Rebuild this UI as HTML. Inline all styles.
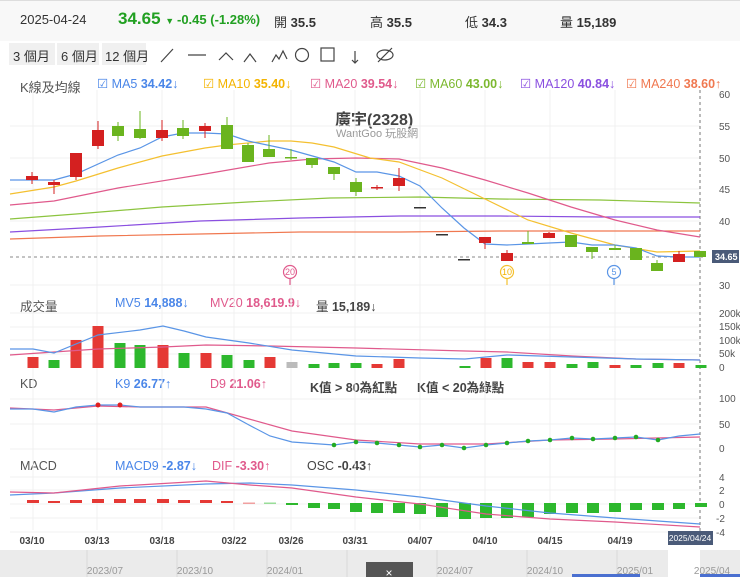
<!DOCTYPE html>
<html><head><meta charset="utf-8"><style>
body{margin:0;width:740px;height:577px;overflow:hidden;background:#fff;font-family:"Liberation Sans","Noto Sans CJK TC",sans-serif;position:relative}
.a{position:absolute;white-space:nowrap}
</style></head><body>
<div class="a" style="left:0;top:0;width:740px;height:40px;background:#f8f8f8;border-top:1px solid #ddd"></div>
<div class="a" style="left:20px;top:12px;font-size:13px;color:#333">2025-04-24</div>
<div class="a" style="left:118px;top:9px;font-size:17px;color:#22a022;font-weight:bold">34.65 <span style="font-size:9px">▼</span></div>
<div class="a" style="left:177px;top:12px;font-size:13px;color:#22a022;font-weight:bold">-0.45 (-1.28%)</div>
<div class="a" style="left:274px;top:12px;font-size:13px;color:#333">開 <b>35.5</b></div>
<div class="a" style="left:370px;top:12px;font-size:13px;color:#333">高 <b>35.5</b></div>
<div class="a" style="left:465px;top:12px;font-size:13px;color:#333">低 <b>34.3</b></div>
<div class="a" style="left:560px;top:12px;font-size:13px;color:#333">量 <b>15,189</b></div>
<div class="a" style="left:9px;top:43px;width:46px;height:22px;background:#f0f0f0"></div>
<div class="a" style="left:57px;top:43px;width:42px;height:22px;background:#f0f0f0"></div>
<div class="a" style="left:102px;top:43px;width:44px;height:22px;background:#f0f0f0"></div>
<div class="a" style="left:13px;top:46px;font-size:13px;color:#333">3 個月</div>
<div class="a" style="left:61px;top:46px;font-size:13px;color:#333">6 個月</div>
<div class="a" style="left:105px;top:46px;font-size:13px;color:#333">12 個月</div>
<svg class="a" style="left:155px;top:43px" width="250" height="24" fill="none" stroke="#444" stroke-width="1.2">
<path d="M6 19L18 6"/><path d="M33 12h18M38 12h1"/><path d="M64 17l7-7 7 7"/>
<path d="M89 19l6-8 6 8"/><path d="M117 19l4-7 3 4 4-8 4 8"/>
<circle cx="147" cy="12" r="6.5"/><rect x="166" y="5" width="13" height="13"/>
<path d="M200 8v12M197 17l3 3 3-3"/><ellipse cx="230" cy="12" rx="8" ry="5"/><path d="M223 19l14-14"/>
</svg>
<div class="a" style="left:20px;top:77px;font-size:13px;color:#555">K線及均線</div>
<div class="a" style="top:76px;left:97px;font-size:12.5px;color:#4a86e8">☑ MA5 <b>34.42↓</b></div>
<div class="a" style="top:76px;left:203px;font-size:12.5px;color:#f4b400">☑ MA10 <b>35.40↓</b></div>
<div class="a" style="top:76px;left:310px;font-size:12.5px;color:#e05a8c">☑ MA20 <b>39.54↓</b></div>
<div class="a" style="top:76px;left:415px;font-size:12.5px;color:#7cb82f">☑ MA60 <b>43.00↓</b></div>
<div class="a" style="top:76px;left:520px;font-size:12.5px;color:#8a4fe0">☑ MA120 <b>40.84↓</b></div>
<div class="a" style="top:76px;left:626px;font-size:12.5px;color:#f07850">☑ MA240 <b>38.60↑</b></div>
<div class="a" style="left:335px;top:106px;font-size:16px;font-weight:bold;color:#444">廣宇(2328)</div>
<div class="a" style="left:336px;top:125px;font-size:11px;color:#999">WantGoo 玩股網</div>
<div class="a" style="left:20px;top:296px;font-size:12.5px;color:#555">成交量</div>
<div class="a" style="left:115px;top:296px;font-size:12.5px;color:#4a86e8">MV5 <b>14,888↓</b></div>
<div class="a" style="left:210px;top:296px;font-size:12.5px;color:#e05a8c">MV20 <b>18,619.9↓</b></div>
<div class="a" style="left:316px;top:296px;font-size:12.5px;color:#444">量 <b>15,189↓</b></div>
<div class="a" style="left:20px;top:377px;font-size:12.5px;color:#555">KD</div>
<div class="a" style="left:115px;top:377px;font-size:12.5px;color:#4a86e8">K9 <b>26.77↑</b></div>
<div class="a" style="left:210px;top:377px;font-size:12.5px;color:#e05a8c">D9 <b>21.06↑</b></div>
<div class="a" style="left:310px;top:377px;font-size:12.5px;color:#444;font-weight:bold">K值 &gt; 80為紅點</div>
<div class="a" style="left:417px;top:377px;font-size:12.5px;color:#444;font-weight:bold">K值 &lt; 20為綠點</div>
<div class="a" style="left:20px;top:459px;font-size:12.5px;color:#555">MACD</div>
<div class="a" style="left:115px;top:459px;font-size:12.5px;color:#4a86e8">MACD9 <b>-2.87↓</b></div>
<div class="a" style="left:212px;top:459px;font-size:12.5px;color:#e05a8c">DIF <b>-3.30↑</b></div>
<div class="a" style="left:307px;top:459px;font-size:12.5px;color:#444">OSC <b>-0.43↑</b></div>
<svg class="a" style="left:0;top:0" width="740" height="577" font-family="Liberation Sans,sans-serif">
<g stroke="#f0f0f0"><path d="M33 90V530M97 90V530M162 90V530M234 90V530M291 90V530M355 90V530M420 90V530M485 90V530M550 90V530M615 90V530"/>
<path d="M10 126H700M10 158H700M10 189H700M10 221H700M10 285H700M10 313H700M10 327H700M10 340H700M10 354H700M10 399H700M10 424H700M10 449H700M10 477H700M10 490H700M10 504H700M10 518H700M10 532H700"/></g>
<path d="M700 90V532" stroke="#777" stroke-dasharray="3,3"/>
<path d="M10 257H705" stroke="#888" stroke-dasharray="3,3"/>
<g fill="none" stroke-width="1.2">
<polyline stroke="#f07850" points="10,239 100,236 200,234 300,232 400,232 500,231 600,231 700,231"/>
<polyline stroke="#8a4fe0" points="10,232 100,227 200,221 300,218 400,216 500,216 600,217 700,217"/>
<polyline stroke="#8cc43f" points="10,219 76,214 162,207 248,202 330,198 420,197 500,199 600,200 700,203"/>
<polyline stroke="#e05a8c" points="10,205 54,201 118,188 205,174 269,163 312,159 356,158 399,159 442,168 485,180 528,193 571,207 615,220 657,230 700,237"/>
<polyline stroke="#f4c030" points="10,194 54,187 76,181 118,168 162,156 205,148 227,145 269,141 291,141 312,143 334,147 370,158 399,162 442,178 485,199 528,220 571,233 615,245 657,252 700,251"/>
<polyline stroke="#5a95e6" points="10,180 54,180 76,174 118,155 140,148 162,137 183,133 205,133 227,134 248,141 291,150 334,162 356,172 377,172 399,176 420,186 442,208 464,228 485,244 507,245 528,244 549,243 571,242 592,245 615,245 636,248 657,256 679,257 700,257"/>
</g>
<g id="c"></g>
<g fill="#fff" stroke-width="1.2" font-size="9" text-anchor="middle">
<circle cx="290" cy="272" r="6.5" stroke="#e05a8c"/><text x="290" y="275" fill="#e05a8c">20</text><path d="M290 279v6" stroke="#e05a8c"/>
<circle cx="507" cy="272" r="6.5" stroke="#f4c030"/><text x="507" y="275" fill="#f4b400">10</text><path d="M507 279v6" stroke="#f4c030"/>
<circle cx="614" cy="272" r="6.5" stroke="#5a95e6"/><text x="614" y="275" fill="#5a95e6">5</text><path d="M614 279v6" stroke="#5a95e6"/>
</g>
<g font-size="10" fill="#555"><text x="719" y="98">60</text><text x="719" y="130">55</text><text x="719" y="162">50</text><text x="719" y="193">45</text><text x="719" y="225">40</text><text x="719" y="289">30</text>
<text x="719" y="317">200k</text><text x="719" y="330">150k</text><text x="719" y="344">100k</text><text x="719" y="357">50k</text><text x="719" y="371">0</text>
<text x="719" y="402">100</text><text x="719" y="428">50</text><text x="719" y="452">0</text>
<text x="719" y="481">4</text><text x="719" y="494">2</text><text x="719" y="508">0</text><text x="716" y="522">-2</text><text x="716" y="536">-4</text></g>
<rect x="712" y="250" width="27" height="13" fill="#4a5a78"/><text x="715" y="260" font-size="9" fill="#fff" font-weight="bold">34.65</text>
<g fill="none" stroke-width="1.2">
<polyline stroke="#e05a8c" points="10,355 54,352 98,349 163,347 206,345 270,346 356,348 465,351 507,352 572,356 636,359 700,360"/>
<polyline stroke="#5a95e6" points="10,349 33,349 54,353 98,335 140,330 163,326 184,331 206,337 249,343 292,350 356,356 420,358 465,359 507,355 572,357 636,359 700,360"/>
<polyline stroke="#e05a8c" points="10,408 54,410 98,406 140,407 206,407 249,419 292,431 356,440 420,444 486,444 550,440 615,439 700,437"/>
<polyline stroke="#5a95e6" points="10,409 33,409 54,412 76,407 98,405 120,405 140,407 184,407 206,409 227,413 249,425 270,436 292,442 334,445 356,442 377,443 420,447 442,445 464,448 486,445 507,443 528,441 550,440 572,438 593,439 615,438 636,437 658,440 679,436 700,434"/>
<polyline stroke="#5a95e6" points="10,495 54,493 120,488 206,484 250,483 292,485 356,490 420,497 486,506 550,513 615,518 700,524"/>
<polyline stroke="#e05a8c" points="10,492 54,493 120,486 206,481 250,485 292,488 356,497 420,504 486,514 550,519 615,522 700,527"/>
</g>
<g fill="#e02020"><circle cx="98" cy="405" r="2.5"/><circle cx="120" cy="405" r="2.5"/></g>
<g fill="#22aa22"><circle cx="334" cy="445" r="2.3"/><circle cx="356" cy="442" r="2.3"/><circle cx="377" cy="443" r="2.3"/><circle cx="399" cy="445" r="2.3"/><circle cx="420" cy="447" r="2.3"/><circle cx="442" cy="445" r="2.3"/><circle cx="464" cy="448" r="2.3"/><circle cx="486" cy="445" r="2.3"/><circle cx="507" cy="443" r="2.3"/><circle cx="528" cy="441" r="2.3"/><circle cx="550" cy="440" r="2.3"/><circle cx="572" cy="438" r="2.3"/><circle cx="593" cy="439" r="2.3"/><circle cx="615" cy="438" r="2.3"/><circle cx="636" cy="437" r="2.3"/><circle cx="658" cy="440" r="2.3"/></g>
<g font-size="10" fill="#444" font-weight="bold" text-anchor="middle"><text x="32" y="544">03/10</text><text x="97" y="544">03/13</text><text x="162" y="544">03/18</text><text x="234" y="544">03/22</text><text x="291" y="544">03/26</text><text x="355" y="544">03/31</text><text x="420" y="544">04/07</text><text x="485" y="544">04/10</text><text x="550" y="544">04/15</text><text x="620" y="544">04/19</text></g>
<rect x="668" y="531" width="45" height="14" fill="#4a5a78"/><text x="690" y="541" font-size="8.5" fill="#fff" text-anchor="middle">2025/04/24</text>
<rect x="0" y="550" width="740" height="27" fill="#ebebeb"/>
<rect x="668" y="550" width="32" height="27" fill="#fff"/>
<g stroke="#d8d8d8"><path d="M87 550v27M177 550v27M267 550v27M347 550v27M437 550v27M527 550v27M617 550v27"/></g>
<g font-size="10" fill="#999" text-anchor="middle"><text x="105" y="574">2023/07</text><text x="195" y="574">2023/10</text><text x="285" y="574">2024/01</text><text x="455" y="574">2024/07</text><text x="545" y="574">2024/10</text><text x="635" y="574">2025/01</text><text x="712" y="574">2025/04</text></g>
<rect x="366" y="562" width="47" height="15" fill="#555"/><text x="389" y="577" font-size="12" fill="#fff" text-anchor="middle">×</text>
<rect x="572" y="574" width="68" height="3" fill="#4a6fd0"/><rect x="700" y="574" width="40" height="3" fill="#4a6fd0"/>
</svg>
<script>
var C=[[32,'r',176,180,172,184],[54,'r',182,185,180,194],[76,'r',153,177,153,180],[98,'r',130,146,121,149],[118,'g',126,136,122,141],[140,'g',129,138,111,139],[162,'r',130,138,120,141],[183,'g',128,136,120,139],[205,'r',126,131,123,138],[227,'g',125,149,117,149],[248,'g',145,162,143,162],[269,'g',149,157,135,157],[291,'g',157,158,149,160],[312,'g',158,165,158,168],[334,'g',167,174,167,180],[356,'g',182,192,178,196],[377,'r',187,188,185,190],[399,'r',178,186,168,191],[420,'k',207,208,207,208],[442,'k',234,235,234,235],[464,'k',259,260,259,260],[485,'r',237,243,237,249],[507,'r',253,261,250,261],[528,'g',242,244,231,244],[549,'r',233,238,232,238],[571,'g',235,247,235,247],[592,'g',247,252,247,259],[615,'g',248,250,245,250],[636,'g',248,260,248,260],[657,'g',263,271,260,271],[679,'r',254,262,251,262],[700,'g',251,257,251,257]];
var col={r:'#d42020',g:'#6ab41e',k:'#333'},s='';
C.forEach(function(c){var f=col[c[1]];s+='<path d="M'+c[0]+' '+c[4]+'V'+c[5]+'" stroke="'+f+'"/><rect x="'+(c[0]-6)+'" y="'+c[2]+'" width="12" height="'+Math.max(1.5,c[3]-c[2])+'" fill="'+f+'"/>';});
var V=[[33,'r',357],[54,'g',360],[76,'r',340],[98,'r',326],[120,'g',343],[140,'g',345],[163,'r',345],[184,'g',353],[206,'r',353],[227,'g',355],[249,'g',360],[270,'r',357],[292,'y',362],[314,'g',364],[334,'g',363],[356,'g',363],[377,'r',364],[399,'r',359],[465,'g',366],[486,'r',358],[507,'g',358],[528,'r',362],[550,'r',362],[572,'g',364],[593,'g',362],[615,'r',365],[636,'g',365],[658,'g',363],[679,'r',363],[701,'g',365]];
var vc={r:'#e53935',g:'#2db82d',y:'#bbb'};
V.forEach(function(v){s+='<rect x="'+(v[0]-5.5)+'" y="'+v[2]+'" width="11" height="'+(368-v[2])+'" fill="'+vc[v[1]]+'"/>';});
var M=[[33,500],[54,501],[76,500],[98,499],[120,499],[140,499],[163,499],[184,500],[206,500],[227,501],[249,502.5],[270,502.5],[292,505],[314,508],[334,509],[356,512],[377,513],[399,513],[420,514],[442,517],[465,519],[486,518],[507,518],[528,517],[550,514],[572,513],[593,513],[615,512],[636,510],[658,510],[679,509],[701,507]];
M.forEach(function(m,i){var f=i<10?'#e53935':(i<11?'#f0a0a0':(i<12?'#9d9':'#2db82d'));var y0=Math.min(503,m[1]),h=Math.max(1.5,Math.abs(m[1]-503));s+='<rect x="'+(m[0]-6)+'" y="'+(m[1]<503?m[1]:503)+'" width="12" height="'+h+'" fill="'+f+'"/>';});
document.getElementById('c').innerHTML=s;
</script>
</body></html>
